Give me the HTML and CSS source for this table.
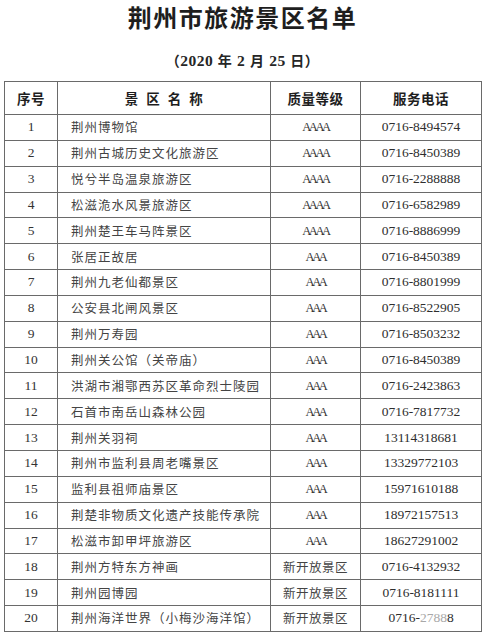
FILE: index.html
```html
<!DOCTYPE html>
<html lang="zh-CN">
<head>
<meta charset="utf-8">
<title>荆州市旅游景区名单</title>
<link rel="stylesheet" href="styles.css">
</head>
<body>
<div class="page">
  <h1 class="title">荆州市旅游景区名单</h1>
  <p class="date">（<span class="num">2020</span> 年 <span class="num">2</span> 月 <span class="num">25</span> 日）</p>
  <table class="list">
    <colgroup>
      <col class="c-no"><col class="c-name"><col class="c-grade"><col class="c-tel">
    </colgroup>
    <thead>
      <tr class="head">
        <th>序号</th>
        <th class="wide">景 区 名 称</th>
        <th>质量等级</th>
        <th>服务电话</th>
      </tr>
    </thead>
    <tbody>
      <tr><td class="no">1</td><td class="name">荆州博物馆</td><td class="grade">AAAA</td><td class="tel">0716-8494574</td></tr>
      <tr><td class="no">2</td><td class="name">荆州古城历史文化旅游区</td><td class="grade">AAAA</td><td class="tel">0716-8450389</td></tr>
      <tr><td class="no">3</td><td class="name">悦兮半岛温泉旅游区</td><td class="grade">AAAA</td><td class="tel">0716-2288888</td></tr>
      <tr><td class="no">4</td><td class="name">松滋洈水风景旅游区</td><td class="grade">AAAA</td><td class="tel">0716-6582989</td></tr>
      <tr><td class="no">5</td><td class="name">荆州楚王车马阵景区</td><td class="grade">AAAA</td><td class="tel">0716-8886999</td></tr>
      <tr><td class="no">6</td><td class="name">张居正故居</td><td class="grade">AAA</td><td class="tel">0716-8450389</td></tr>
      <tr><td class="no">7</td><td class="name">荆州九老仙都景区</td><td class="grade">AAA</td><td class="tel">0716-8801999</td></tr>
      <tr><td class="no">8</td><td class="name">公安县北闸风景区</td><td class="grade">AAA</td><td class="tel">0716-8522905</td></tr>
      <tr><td class="no">9</td><td class="name">荆州万寿园</td><td class="grade">AAA</td><td class="tel">0716-8503232</td></tr>
      <tr><td class="no">10</td><td class="name">荆州关公馆（关帝庙）</td><td class="grade">AAA</td><td class="tel">0716-8450389</td></tr>
      <tr><td class="no">11</td><td class="name">洪湖市湘鄂西苏区革命烈士陵园</td><td class="grade">AAA</td><td class="tel">0716-2423863</td></tr>
      <tr><td class="no">12</td><td class="name">石首市南岳山森林公园</td><td class="grade">AAA</td><td class="tel">0716-7817732</td></tr>
      <tr><td class="no">13</td><td class="name">荆州关羽祠</td><td class="grade">AAA</td><td class="tel">13114318681</td></tr>
      <tr><td class="no">14</td><td class="name">荆州市监利县周老嘴景区</td><td class="grade">AAA</td><td class="tel">13329772103</td></tr>
      <tr><td class="no">15</td><td class="name">监利县祖师庙景区</td><td class="grade">AAA</td><td class="tel">15971610188</td></tr>
      <tr><td class="no">16</td><td class="name">荆楚非物质文化遗产技能传承院</td><td class="grade">AAA</td><td class="tel">18972157513</td></tr>
      <tr><td class="no">17</td><td class="name">松滋市卸甲坪旅游区</td><td class="grade">AAA</td><td class="tel">18627291002</td></tr>
      <tr><td class="no">18</td><td class="name">荆州方特东方神画</td><td class="grade cn">新开放景区</td><td class="tel">0716-4132932</td></tr>
      <tr><td class="no">19</td><td class="name">荆州园博园</td><td class="grade cn">新开放景区</td><td class="tel">0716-8181111</td></tr>
      <tr><td class="no">20</td><td class="name">荆州海洋世界（小梅沙海洋馆）</td><td class="grade cn">新开放景区</td><td class="tel">0716-<span class="faded">2788</span>8</td></tr>
    </tbody>
  </table>
</div>
</body>
</html>
```

FILE: styles.css
```css
html, body {
  margin: 0;
  padding: 0;
  background: #ffffff;
}

.page {
  width: 485px;
  padding: 0 0 0 4px;
  box-sizing: border-box;
  font-family: "Noto Sans CJK SC", "Liberation Serif", serif;
  color: #333333;
}

.title {
  margin: 0 0 0 -4px;
  padding: 0;
  text-align: center;
  font-size: 24px;
  line-height: 34px;
  font-weight: 700;
  letter-spacing: 1.5px;
  color: #1e1e1e;
}

.date {
  margin: 16px 0 0 -4px;
  text-align: center;
  font-size: 14px;
  line-height: 20px;
  font-weight: 700;
  color: #262626;
  letter-spacing: 0.5px;
  word-spacing: 1px;
}

.date .num {
  font-family: "Liberation Serif", serif;
  font-size: 15.5px;
}

.list {
  margin-top: 10px;
  width: 477px;
  table-layout: fixed;
  border-collapse: collapse;
  border: 1.5px solid #555555;
}

.c-no { width: 53px; }
.c-name { width: 213px; }
.c-grade { width: 90px; }
.c-tel { width: 121px; }

.list th,
.list td {
  border: 1px solid #6a6a6a;
  padding: 0;
  overflow: hidden;
  white-space: nowrap;
}

.head {
  height: 33px;
}

.head th {
  font-size: 13.5px;
  font-weight: 700;
  color: #1e1e1e;
  text-align: center;
  letter-spacing: 0.5px;
}

.head th.wide {
  word-spacing: 4px;
}

.list tbody tr {
  height: 25.85px;
}

.list td {
  font-size: 12.5px;
  line-height: 16px;
}

.no {
  text-align: center;
  font-family: "Liberation Serif", serif;
  font-size: 13.5px !important;
}

.name {
  padding-left: 13px !important;
  letter-spacing: 1px;
  font-weight: 400;
  color: #444444;
}

.grade {
  text-align: center;
  font-family: "Liberation Serif", serif;
  font-size: 12.5px;
  letter-spacing: -2.4px;
}

.grade.cn {
  font-family: "Noto Sans CJK SC", sans-serif;
  letter-spacing: 0.5px;
  font-size: 12.5px;
  color: #444444;
}

.tel {
  text-align: center;
  font-family: "Liberation Serif", serif;
  font-size: 13.5px !important;
  color: #2e2e2e;
}

.faded {
  color: #a8a8a8;
}
```
